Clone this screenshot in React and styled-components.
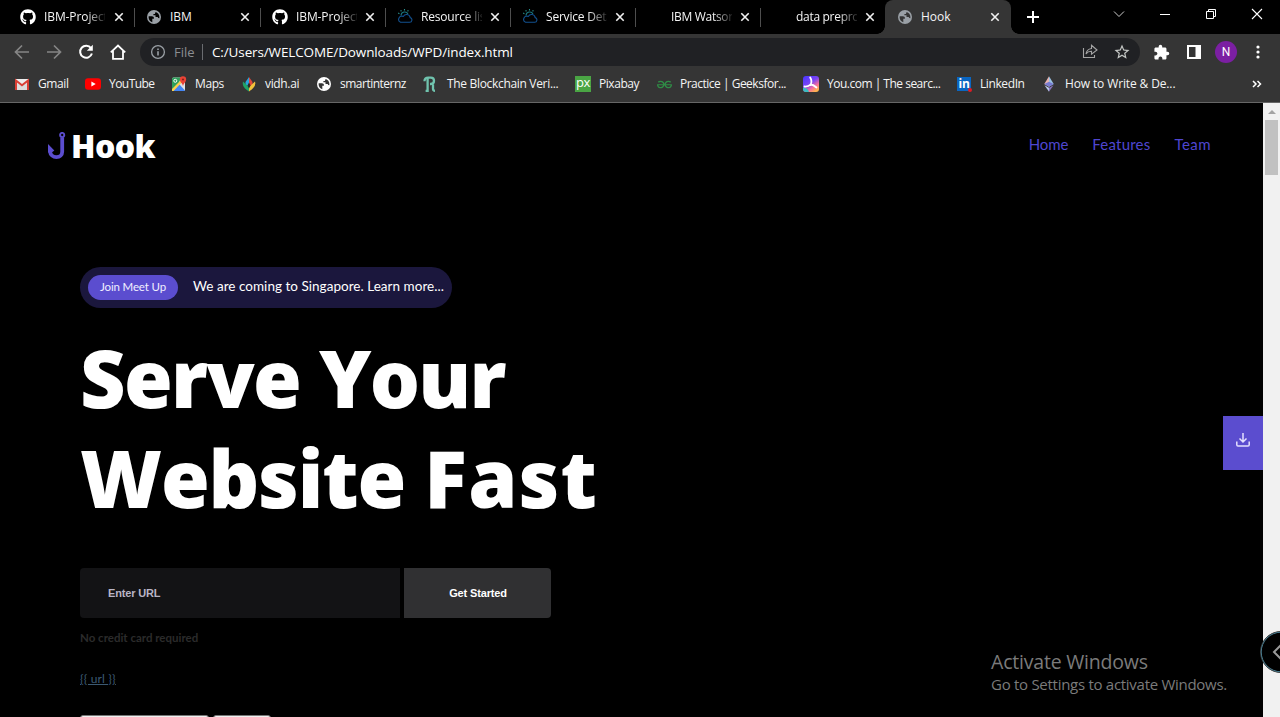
import React from "react";
import styled, { createGlobalStyle, css } from "styled-components";
import { FaGithub } from "react-icons/fa";
import { MdExtension, MdStarBorder } from "react-icons/md";
import { SiGeeksforgeeks } from "react-icons/si";

const Global = createGlobalStyle`
  * { box-sizing: border-box; }
  html, body { margin: 0; height: 100%; background: #000; overflow: hidden; }
  svg { display: block; flex: none; }
`;

const ui = css`
  font-family: "Open Sans", "Noto Sans", sans-serif;
`;
const muli = css`
  font-family: Lato, "Open Sans", sans-serif;
`;

const Window = styled.div`
  width: 1280px;
  height: 717px;
  display: flex;
  flex-direction: column;
  position: relative;
  overflow: hidden;
  background: #000;
  ${ui}
`;

/* Tab strip */
const TabStrip = styled.div`
  height: 34px;
  padding-left: 9px;
  display: flex;
  flex: none;
  background: #000;
`;
const Tab = styled.div`
  width: ${(p) => p.$w || 125}px;
  flex: none;
  height: 34px;
  padding: 0 ${(p) => (p.$w === 124 ? 10 : 11)}px 0 ${(p) => (p.$active ? 12 : 11)}px;
  display: flex;
  align-items: center;
  position: relative;
  background: ${(p) => (p.$active ? "#353535" : "transparent")};
  border-radius: 8px 8px 0 0;
  &::after {
    content: "";
    display: ${(p) => (p.$divider ? "block" : "none")};
    position: absolute;
    right: 0;
    top: 8px;
    width: 1px;
    height: 19px;
    background: #4e4e4e;
  }
`;
const TabFoot = styled.i`
  position: absolute;
  bottom: 0;
  width: 8px;
  height: 8px;
  ${(p) => (p.$side === "left" ? "left: -8px;" : "right: -8px;")}
  background: radial-gradient(circle at ${(p) => (p.$side === "left" ? "0 0" : "100% 0")}, transparent 7.5px, #353535 8px);
`;
const Favicon = styled.span`
  width: 16px;
  height: 16px;
  flex: none;
  display: flex;
  align-items: center;
  justify-content: center;
  color: ${(p) => p.$color || "#fff"};
`;
const TabTitle = styled.span`
  margin-left: 8px;
  width: 61px;
  flex: none;
  white-space: nowrap;
  font-size: 12px;
  line-height: 18px;
  letter-spacing: ${(p) => p.$ls || 0}px;
  color: #f4f4f4;
  ${(p) => p.$fade && css`mask-image: linear-gradient(90deg, #000 42px, transparent 64px);`}
`;
const CloseIcon = styled.svg`
  margin-left: auto;
`;
const NewTab = styled.div`
  width: 28px;
  height: 34px;
  margin-left: 8px;
  display: flex;
  align-items: center;
  justify-content: center;
`;
const Caption = styled.div`
  margin-left: auto;
  height: 28px;
  display: flex;
`;
const CaptionButton = styled.div`
  width: 46px;
  display: flex;
  align-items: center;
  justify-content: center;
`;

/* Toolbar */
const Toolbar = styled.div`
  height: 36px;
  flex: none;
  background: #353535;
  display: flex;
  align-items: center;
  padding-left: 14px;
`;
const NavIcons = styled.div`
  width: 126px;
  display: flex;
  gap: 16px;
`;
const AddressBar = styled.div`
  width: 1000px;
  height: 28px;
  border-radius: 14px;
  background: #202124;
  display: flex;
  align-items: center;
  padding: 0 9px 0 10px;
  color: #9aa0a6;
`;
const Scheme = styled.span`
  margin-left: 8px;
  width: 28px;
  font-size: 13px;
  line-height: 18px;
  color: #8b8e92;
`;
const AddressRule = styled.span`
  width: 1px;
  height: 16px;
  background: #6a6c70;
`;
const Url = styled.span`
  margin-left: 9px;
  padding-bottom: 1px;
  font-size: 13.5px;
  line-height: 18px;
  letter-spacing: -0.13px;
  color: #fff;
  white-space: nowrap;
  flex: 1;
`;
const AddressActions = styled.div`
  display: flex;
  gap: 15px;
`;
const ToolbarActions = styled.div`
  display: flex;
  align-items: center;
  margin-left: 13px;
`;
const SidePanel = styled.svg`
  margin-left: 17px;
`;
const Avatar = styled.div`
  width: 22px;
  height: 22px;
  margin: 0 12px 0 14px;
  border-radius: 50%;
  background: #7b1fa2;
  color: #fff;
  display: flex;
  align-items: center;
  justify-content: center;
  font: 12px Roboto, sans-serif;
`;

/* Bookmarks */
const Bookmarks = styled.div`
  height: 33px;
  flex: none;
  background: #353535;
  border-bottom: 1px solid #666;
  display: flex;
  align-items: center;
  padding: 0 18px 4px 14px;
`;
const Bookmark = styled.div`
  width: ${(p) => p.$w}px;
  flex: none;
  display: flex;
  align-items: center;
  gap: 8px;
  white-space: nowrap;
  font-size: 12px;
  line-height: 18px;
  color: #f4f4f4;
  letter-spacing: ${(p) => p.$ls}px;
`;
const Overflow = styled.svg`
  margin-left: auto;
`;

/* Page */
const Viewport = styled.div`
  flex: 1;
  min-height: 0;
  display: flex;
`;
const Page = styled.main`
  flex: 1;
  background: #000;
  overflow: hidden;
`;
const Header = styled.header`
  height: 164px;
  padding: 26px 52px 0 48px;
  display: flex;
  justify-content: space-between;
  align-items: flex-start;
`;
const Brand = styled.div`
  display: flex;
  align-items: center;
  height: 34px;
  color: #fff;
  font-weight: 800;
  font-size: 32px;
  line-height: 34px;
  letter-spacing: -0.6px;
  gap: 5px;
`;
const Menu = styled.nav`
  display: flex;
  gap: 24px;
  padding-top: 5px;
  font-size: 15px;
  line-height: 20px;
  color: #4f46d0;
  ${muli}
`;
const MenuLink = styled.a`
  letter-spacing: ${(p) => p.$ls}px;
`;
const Hero = styled.section`
  padding-left: 80px;
  display: flex;
  flex-direction: column;
  align-items: flex-start;
  ${muli}
`;
const Notice = styled.div`
  width: 372px;
  height: 41px;
  border-radius: 21px;
  background: #1b173d;
  display: flex;
  align-items: center;
  padding: 0 8px;
  white-space: nowrap;
`;
const NoticeTag = styled.span`
  width: 90px;
  height: 25px;
  flex: none;
  border-radius: 13px;
  background: #5b4dcf;
  color: #f1efff;
  font-size: 11.5px;
  line-height: 24px;
  text-align: center;
  letter-spacing: -0.15px;
`;
const NoticeText = styled.span`
  margin: -3px 0 0 15px;
  font-size: 13.5px;
  letter-spacing: 0.03px;
  color: #fff;
`;
const Title = styled.h1`
  margin: 20px 0 0;
  color: #fff;
  font-size: 79px;
  line-height: 100px;
  font-weight: 800;
  white-space: nowrap;
  ${ui}
`;
const TitleLine = styled.span`
  display: block;
  letter-spacing: -1.7px;
`;
const TitleWord = styled.span`
  letter-spacing: ${(p) => p.$ls}px;
`;
const UrlForm = styled.div`
  margin-top: 40px;
  display: flex;
  gap: 4px;
  height: 50px;
  font: bold 11px/50px "Liberation Sans", Arial, sans-serif;
  letter-spacing: -0.15px;
`;
const UrlField = styled.div`
  width: 320px;
  padding-left: 28px;
  border-radius: 4px 0 0 4px;
  background: #131315;
  color: #b9b5c6;
`;
const Submit = styled.div`
  width: 147px;
  padding-left: 1px;
  border-radius: 0 4px 4px 0;
  background: #303032;
  color: #fff;
  text-align: center;
`;
const Hint = styled.div`
  margin-top: 12px;
  font-size: 11.5px;
  line-height: 16px;
  font-weight: 700;
  color: #2b2b2b;
`;
const Placeholder = styled.a`
  margin-top: 25px;
  font-size: 12px;
  line-height: 16px;
  letter-spacing: 0.15px;
  color: #3c5a73;
  text-decoration: underline;
`;
const Stubs = styled.div`
  margin-top: 28px;
  display: flex;
  gap: 4px;
`;
const Stub = styled.div`
  width: ${(p) => p.$w}px;
  height: 20px;
  border: 1px solid #767676;
  border-radius: 3px;
  background: #efefef;
`;
const Scrollbar = styled.div`
  width: 17px;
  background: #f1f1f1;
  display: flex;
  flex-direction: column;
  align-items: center;
`;
const ScrollArrow = styled.div`
  height: 17px;
  display: flex;
  align-items: center;
`;
const Thumb = styled.div`
  width: 13px;
  height: 55px;
  background: #c1c1c1;
`;

/* Floating overlays */
const DownloadTab = styled.div`
  position: absolute;
  right: 17px;
  top: 416px;
  width: 40px;
  height: 54px;
  padding-bottom: 6px;
  background: #5b4dcf;
  display: flex;
  align-items: center;
  justify-content: center;
`;
const EdgeHandle = styled.svg`
  position: absolute;
  left: 1260px;
  top: 631px;
`;
const Watermark = styled.div`
  position: absolute;
  left: 991px;
  top: 649px;
  color: #7b7b7b;
  white-space: nowrap;
`;
const WatermarkTitle = styled.div`
  font-size: 19.5px;
  line-height: 26px;
  letter-spacing: -0.2px;
`;
const WatermarkText = styled.div`
  margin-top: -1px;
  font-size: 15px;
  line-height: 20px;
  letter-spacing: -0.28px;
`;

const Cloud = () => (
  <svg width="16" height="16" viewBox="0 0 16 16" fill="none" strokeWidth="1.1">
    <path d="M3.600 13.300h9a2.400 2.400 0 0 0 .6-4.700A3.700 3.700 0 0 0 6.300 7.400 3.100 3.100 0 1 0 3.600 13.300Z" stroke="#12508f" />
    <path d="M4 6.500A3.700 3.700 0 0 1 11 5" stroke="#19757c" />
    <path d="M7.500 0v1.400M3.700 1.200l.7 1.200M11.300 1.200l-.7 1.200M1.200 4l1.200.7" stroke="#2a8f8b" />
  </svg>
);
const Globe = ({ fill, land }) => (
  <svg width="14" height="14" viewBox="0 0 14 14">
    <circle cx="7" cy="7" r="7" fill={fill} />
    <path d="M1.700 6.200h3.200c1.300 0 2 .7 2 1.800v.8H5.300v3.500C3.200 11.700 1.600 9.800 1.600 7.300Z" fill={land} />
    <path d="M8.600 1.900c2.200.7 3.800 2.600 3.800 5 0 .5 0 .9-.2 1.400-.8-.2-1.300-.7-1.500-1.400H8.500V5.300H6.400V3.900h1.500Z" fill={land} />
  </svg>
);
const Close = () => (
  <CloseIcon width="10" height="10" viewBox="0 0 10 10">
    <path d="M1.3 1.3 8.7 8.7M8.7 1.3 1.3 8.7" stroke="#f1f1f1" strokeWidth="1.6" />
  </CloseIcon>
);

const tabs = [
  { title: "IBM-Project", w: 126, ls: -0.1, icon: <FaGithub size={16} />, fade: true },
  { title: "IBM", w: 126, icon: <Globe fill="#9aa0a6" land="#000" /> },
  { title: "IBM-Project", ls: -0.1, icon: <FaGithub size={16} />, fade: true },
  { title: "Resource lis", ls: -0.2, icon: <Cloud />, fade: true },
  { title: "Service Deta", ls: -0.2, icon: <Cloud />, fade: true },
  { title: "IBM Watson", ls: -0.3, fade: true },
  { title: "data prepro", w: 124, ls: -0.3, fade: true },
  { title: "Hook", w: 126, icon: <Globe fill="#9aa0a6" land="#353535" />, active: true },
];

const Gmail = () => (
  <svg width="16" height="16" viewBox="0 0 16 16">
    <path d="M1 3h14v11H1z" fill="#eee" />
    <path d="M3 14V6l5 4 5-4v8" fill="#ddd" />
    <path d="M2 14V4.500L8 9.200l6-4.700V14" fill="none" stroke="#d93f35" strokeWidth="2" />
  </svg>
);
const YouTube = () => (
  <svg width="16" height="16" viewBox="0 0 16 16">
    <rect y="2.2" width="16" height="11.6" rx="3" fill="#f00" />
    <path d="m6.4 5.600 4.300 2.400-4.300 2.400z" fill="#fff" />
  </svg>
);
const MapsIcon = () => (
  <svg width="16" height="16" viewBox="0 0 16 16">
    <rect x="1" y="1.5" width="13" height="13.5" rx="1.5" fill="#dfe3e6" />
    <path d="M1 3a1.500 1.500 0 0 1 1.500-1.500H10L7.500 8 1 14z" fill="#2e9f5b" />
    <path d="m8 8 6 6.500-1 .5H2z" fill="#4285f4" />
    <path d="m1 13 8.500-8.500L11 6.200 2.500 15H1z" fill="#fbd04b" />
    <circle cx="4.300" cy="4.800" r="1.500" fill="none" stroke="#fff" />
    <path d="M12 10C11.600 7.500 8.800 6.200 8.800 3.500a3.200 3.200 0 0 1 6.400 0C15.200 6.200 12.400 7.500 12 10Z" fill="#ea4335" />
    <circle cx="12" cy="3.500" r="1.100" fill="#8c2219" />
  </svg>
);
const Vidh = () => (
  <svg width="16" height="16" viewBox="0 0 16 16">
    <path d="M8 1 4.500 6v3L8 11z" fill="#2aa5de" />
    <path d="M8 1 11.500 6v3L8 11z" fill="#e2473a" />
    <path d="M2 5.500 8 11v4.400C4 13 .8 10 2 5.500Z" fill="#20a366" />
    <path d="M14 5.500 8 11v4.400c4-2.400 7.200-5.400 6-9.900Z" fill="#f3c13a" />
    <path d="m8 6.500 1.600 3L8 12.500l-1.600-3z" fill="#2b2b2b" />
  </svg>
);
const Chain = () => (
  <svg width="16" height="16" viewBox="0 0 16 16" fill="none" stroke="#70c3ae" strokeWidth="2.300">
    <path d="M1.500 5.200C1.500 3 3 1.600 5.200 1.600h2.600c2 0 3.200 1.300 3.200 3.200S9.800 8 7.800 8H7M4.600 2v12.800h-2M10 8.500v4.300c0 1.300.7 2 2 2" />
  </svg>
);
const PxLogo = styled.span`
  width: 16px;
  height: 16px;
  background: #4aa544;
  color: #fff;
  text-align: center;
  font: 500 13px/13px "Open Sans", sans-serif;
  letter-spacing: -0.4px;
`;
const You = () => (
  <svg width="16" height="16" viewBox="0 0 16 16">
    <defs>
      <linearGradient id="you" x1="0" y1="0" x2=".7" y2="1">
        <stop offset="0" stopColor="#4534ff" />
        <stop offset=".5" stopColor="#7b44f5" />
        <stop offset=".78" stopColor="#f56e9a" />
        <stop offset="1" stopColor="#ffb14f" />
      </linearGradient>
    </defs>
    <rect width="16" height="16" rx="3" fill="url(#you)" />
    <path d="M0 12c3-.5 5 .5 6 4H3a3 3 0 0 1-3-3z" fill="#38bdc0" />
    <path d="M7.200 1.500C8.800 4 8.800 6.500 7.500 9M1.500 10.500c3 .3 4.700-.6 6-2M7.500 8.500c1.800 0 3.800 1 6 3" fill="none" stroke="#fff" strokeWidth="1.800" strokeLinecap="round" />
  </svg>
);
const LinkedInTile = styled.span`
  width: 14px;
  height: 14px;
  background: #0a66c2;
  color: #fff;
  text-align: center;
  font: bold 12px/13px "Open Sans", sans-serif;
  letter-spacing: -0.3px;
  position: relative;
  &::after {
    content: "";
    position: absolute;
    right: -1px;
    bottom: -1px;
    width: 4px;
    height: 4px;
    border-radius: 50%;
    background: #e01b24;
  }
`;
const Eth = () => (
  <svg width="16" height="16" viewBox="0 0 16 16">
    <path d="M8 .3 3.300 8 8 10.700z" fill="#e8b5b1" />
    <path d="M8 .3 12.700 8 8 10.700z" fill="#9bc3e4" />
    <path d="m8 5.800-4.700 2.200L8 10.700 12.700 8z" fill="#777bd1" />
    <path d="m3.500 9.300 4.500 6.500v-4z" fill="#b8c8eb" />
    <path d="m12.500 9.300-4.500 6.500v-4z" fill="#8a75bd" />
  </svg>
);

const bookmarks = [
  { label: "Gmail", w: 71, ls: -0.4, icon: <Gmail /> },
  { label: "YouTube", w: 86, ls: -0.55, icon: <YouTube /> },
  { label: "Maps", w: 70, ls: -0.4, icon: <MapsIcon /> },
  { label: "vidh.ai", w: 75, ls: -0.35, icon: <Vidh /> },
  { label: "smartinternz", w: 107, ls: -0.5, icon: <Globe fill="#fff" land="#353535" /> },
  { label: "The Blockchain Veri...", w: 152, ls: -0.32, icon: <Chain /> },
  { label: "Pixabay", w: 81, ls: -0.45, icon: <PxLogo>px</PxLogo> },
  { label: "Practice | Geeksfor...", w: 147, ls: -0.5, icon: <SiGeeksforgeeks size={15} color="#2f8d46" /> },
  { label: "You.com | The searc...", w: 153, ls: -0.5, icon: <You /> },
  { label: "LinkedIn", w: 85, ls: -0.4, icon: <LinkedInTile>in</LinkedInTile> },
  { label: "How to Write & De...", w: 140, ls: -0.13, icon: <Eth /> },
];

export default function App() {
  return (
    <Window>
      <Global />
      <TabStrip>
        {tabs.map((t, i) => (
          <Tab key={i} $w={t.w} $active={t.active} $divider={i < 6}>
            {t.active && <TabFoot $side="left" />}
            <Favicon>{t.icon}</Favicon>
            <TabTitle $fade={t.fade} $ls={t.ls}>{t.title}</TabTitle>
            <Close />
            {t.active && <TabFoot $side="right" />}
          </Tab>
        ))}
        <NewTab>
          <svg width="12" height="12" viewBox="0 0 12 12"><path d="M6 0v12M0 6h12" stroke="#fff" strokeWidth="2" /></svg>
        </NewTab>
        <Caption>
          <CaptionButton>
            <svg width="10" height="6" viewBox="0 0 10 6" overflow="visible"><path d="m0 .500 5 5 5-5" fill="none" stroke="#ccc" /></svg>
          </CaptionButton>
          <CaptionButton>
            <svg width="10" height="1"><path d="M0 .5h10" stroke="#fff" /></svg>
          </CaptionButton>
          <CaptionButton>
            <svg width="10" height="10" viewBox="0 0 10 10" fill="none" stroke="#fff"><path d="M.5 2.500h7v7h-7zM2.500 2.500v-2h7v7h-2" /></svg>
          </CaptionButton>
          <CaptionButton>
            <svg width="10" height="10" viewBox="0 0 10 10" overflow="visible"><path d="m0 0 10 10M10 0 0 10" stroke="#fff" strokeWidth="1.100" /></svg>
          </CaptionButton>
        </Caption>
      </TabStrip>

      <Toolbar>
        <NavIcons>
          <svg width="16" height="16" viewBox="0 0 16 16" fill="none" stroke="#858585" strokeWidth="1.700"><path d="M15 8H2M8 1.500 1.500 8 8 14.500" /></svg>
          <svg width="16" height="16" viewBox="0 0 16 16" fill="none" stroke="#858585" strokeWidth="1.700"><path d="M1 8h13M8 1.500 14.500 8 8 14.500" /></svg>
          <svg width="16" height="16" viewBox="0 0 16 16" fill="none" stroke="#fff" strokeWidth="2"><path d="M13 4.200A6 6 0 1 0 13.900 9.500" /><path d="M14.800.8v6H8.800z" fill="#fff" stroke="none" /></svg>
          <svg width="16" height="16" viewBox="0 0 16 16" fill="none" stroke="#fff" strokeWidth="1.800"><path d="M.8 8.400 8 1.500l7.200 6.900M3 7v7.900h10V7" /></svg>
        </NavIcons>
        <AddressBar>
          <svg width="16" height="16" viewBox="0 0 16 16" fill="none" stroke="#9aa0a6" strokeWidth="1.300"><circle cx="8" cy="8" r="6.400" /><path d="M8 7.200v4.200M8 4.400v1.500" strokeWidth="1.600" /></svg>
          <Scheme>File</Scheme>
          <AddressRule />
          <Url>C:/Users/WELCOME/Downloads/WPD/index.html</Url>
          <AddressActions>
            <svg width="16" height="16" viewBox="0 0 16 16" fill="none" stroke="#a5a5a5" strokeWidth="1.100"><path d="M1.500 5v9.500h11V12M9.500 5.500V2.300L15 7 9.500 11.200V8.300C7 8.200 5.400 9 4 11c.4-3 2.200-5 5.500-5.500Z" /></svg>
            <MdStarBorder size={18} color="#c4c7c5" />
          </AddressActions>
        </AddressBar>
        <ToolbarActions>
          <MdExtension size={17} color="#fff" />
          <SidePanel width="14" height="14" viewBox="0 0 14 14"><path d="M0 0h14v14H0z" fill="#fff" /><path d="M2 2h6.500v10H2z" fill="#353535" /></SidePanel>
          <Avatar>N</Avatar>
          <svg width="18" height="16" viewBox="0 0 18 16" fill="#fff"><circle cx="9" cy="3" r="1.600" /><circle cx="9" cy="8" r="1.600" /><circle cx="9" cy="13" r="1.600" /></svg>
        </ToolbarActions>
      </Toolbar>

      <Bookmarks>
        {bookmarks.map((b) => (
          <Bookmark key={b.label} $w={b.w} $ls={b.ls}>
            <Favicon>{b.icon}</Favicon>
            {b.label}
          </Bookmark>
        ))}
        <Overflow width="10" height="8" viewBox="0 0 10 8" fill="none" stroke="#fff" strokeWidth="1.500"><path d="m1 1 3 3-3 3M5.500 1l3 3-3 3" /></Overflow>
      </Bookmarks>

      <Viewport>
        <Page>
          <Header>
            <Brand>
              <svg width="18" height="28" viewBox="0 0 18 28" fill="none" stroke="#5b4dcf">
                <circle cx="14.200" cy="3" r="2.100" strokeWidth="1.900" />
                <path d="M14.200 5.500v14.200c0 3.300-2.300 5.400-5.800 5.400-3.200 0-6-2-6.400-5.600" strokeWidth="3.800" />
                <path d="M0 12v8.500h3.800L6.300 18.400z" fill="#5b4dcf" stroke="none" />
              </svg>
              Hook
            </Brand>
            <Menu>
              <MenuLink $ls={-0.1}>Home</MenuLink>
              <MenuLink $ls={0.22}>Features</MenuLink>
              <MenuLink $ls={0.45}>Team</MenuLink>
            </Menu>
          </Header>
          <Hero>
            <Notice>
              <NoticeTag>Join Meet Up</NoticeTag>
              <NoticeText>We are coming to Singapore. Learn more...</NoticeText>
            </Notice>
            <Title>
              <TitleLine>Serve Your</TitleLine>
              <TitleLine>
                <TitleWord $ls={-1.2}>Website </TitleWord>
                <TitleWord $ls={1.2}>Fast</TitleWord>
              </TitleLine>
            </Title>
            <UrlForm>
              <UrlField>Enter URL</UrlField>
              <Submit>Get Started</Submit>
            </UrlForm>
            <Hint>No credit card required</Hint>
            <Placeholder>{"{{ url }}"}</Placeholder>
            <Stubs>
              <Stub $w={129} />
              <Stub $w={58} />
            </Stubs>
          </Hero>
        </Page>
        <Scrollbar>
          <ScrollArrow>
            <svg width="8" height="4"><path d="M0 4 4 0l4 4z" fill="#a3a3a3" /></svg>
          </ScrollArrow>
          <Thumb />
        </Scrollbar>
      </Viewport>

      <DownloadTab>
        <svg width="14" height="14" viewBox="0 0 14 14" fill="none" stroke="#e4e0ff" strokeWidth="1.500"><path d="M7 0v9M3.500 5.500 7 9l3.500-3.500M.8 8.500v3.200c0 1 .4 1.300 1.200 1.300h10c.8 0 1.200-.3 1.200-1.300V8.500" /></svg>
      </DownloadTab>
      <Watermark>
        <WatermarkTitle>Activate Windows</WatermarkTitle>
        <WatermarkText>Go to Settings to activate Windows.</WatermarkText>
      </Watermark>
      <EdgeHandle width="20" height="42" viewBox="0 0 20 42">
        <circle cx="21" cy="21" r="20.500" fill="#000" stroke="#3a3a3a" />
        <circle cx="21" cy="21" r="19.800" fill="none" stroke="#4d8296" />
        <path d="m21 14-7 7 7 7" fill="none" stroke="#999" strokeWidth="2" />
      </EdgeHandle>
    </Window>
  );
}
